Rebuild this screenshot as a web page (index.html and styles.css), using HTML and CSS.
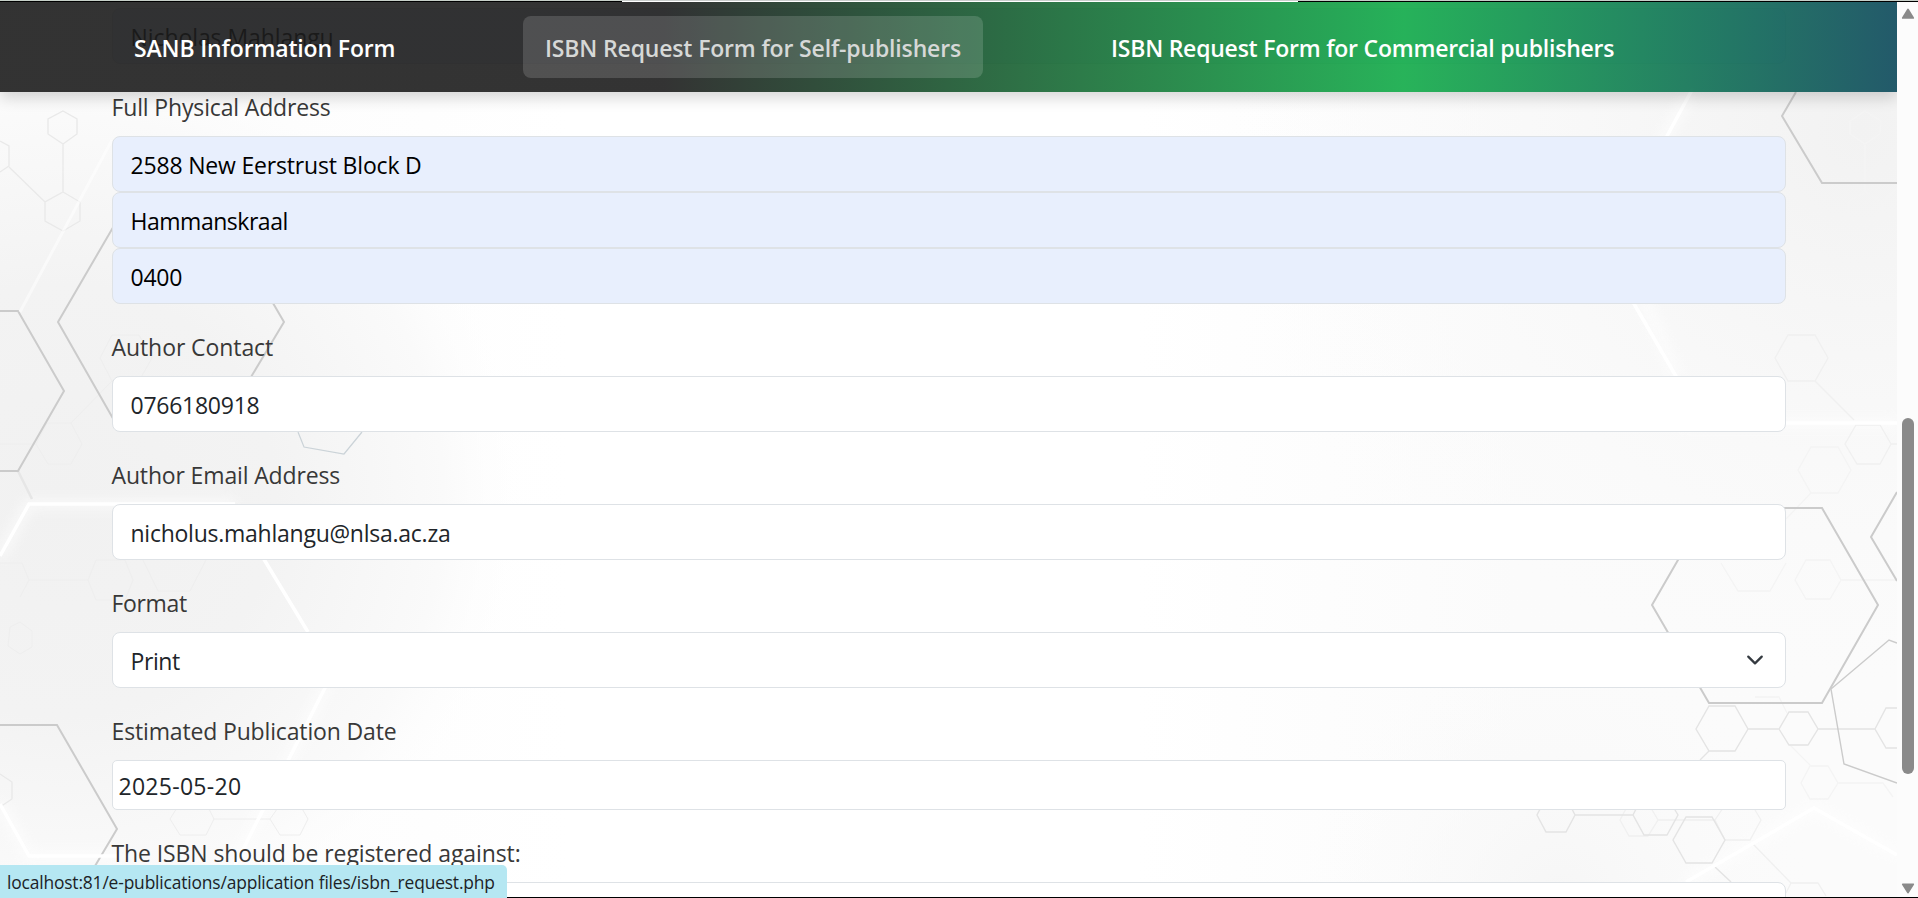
FILE: index.html
```html
<!DOCTYPE html>
<html lang="en">
<head>
<meta charset="utf-8">
<title>ISBN Request Form</title>
<link rel="stylesheet" href="styles.css">
</head>
<body>
<div class="top-edge"><span class="top-edge-light"></span></div>
<div class="window">
  <div class="page">
    <svg class="backdrop" viewBox="0 0 1897 898" aria-hidden="true">
      <defs>
        <radialGradient id="shadeLeft" gradientUnits="userSpaceOnUse" cx="60" cy="500" r="480">
          <stop offset="0" stop-color="#f1f1f1"/><stop offset=".45" stop-color="#f3f3f3"/><stop offset=".8" stop-color="#fafafa"/><stop offset="1" stop-color="#fff" stop-opacity="0"/>
        </radialGradient>
        <radialGradient id="shadeRight" gradientUnits="userSpaceOnUse" cx="1860" cy="130" r="640">
          <stop offset="0" stop-color="#f2f2f2"/><stop offset=".35" stop-color="#f7f7f7"/><stop offset="1" stop-color="#fcfcfc" stop-opacity="0"/>
        </radialGradient>
        <linearGradient id="base" x1="0" x2="1" y1="0" y2="0">
          <stop offset="0" stop-color="#fbfbfb"/><stop offset=".15" stop-color="#fdfdfd"/><stop offset=".3" stop-color="#fff"/><stop offset=".6" stop-color="#fff"/><stop offset=".8" stop-color="#fbfbfb"/><stop offset="1" stop-color="#fbfbfb"/>
        </linearGradient>
        <radialGradient id="shadeBottom" gradientUnits="userSpaceOnUse" cx="1560" cy="898" r="260">
          <stop offset="0" stop-color="#f6f6f6"/><stop offset="1" stop-color="#fbfbfb" stop-opacity="0"/>
        </radialGradient>
        <filter id="glow" x="-20%" y="-20%" width="140%" height="140%"><feGaussianBlur stdDeviation="6"/></filter>
      </defs>
      <rect width="1897" height="898" fill="url(#base)"/>
      <rect width="620" height="898" fill="url(#shadeLeft)"/>
      <rect x="1200" width="697" height="898" fill="url(#shadeRight)"/>
      <rect x="1200" y="600" width="697" height="298" fill="url(#shadeBottom)"/>
      <g class="halo" filter="url(#glow)">
        <path d="M0 556 29 504H235M0 804l29 52h90M328 682l-93 183"/>
        <path d="M1693 88l-80 140 64 148M1677 423h220M1686 882l128-74 83 47"/>
      </g>
      <g class="trace faint">
        <path d="M112 335h27l13 23-13 23h-27l-12-23zM112 381l-41 42M47 423h24l11 21-11 20H48l-12-20zM0 444h36"/>
        <path d="M0 563h22l7 17-9 17M29 580h59M96 560h29l8 20-8 20H96l-8-20zM143 560l15 31h32l16-31"/>
        <path d="M170 819l10-16h26l8 16-8 16h-26zM213 819h57M270 819l10-14h20l8 14-8 16h-20z"/>
        <path d="M10 627l10-5 12 9v16l-12 7-12-8z"/>
      </g>
      <g class="trace fainter">
        <path d="M1865 111l16 10-1 13-15 10-15-10v-13zM1865 144v48M1865 192l17 10v19l-17 10-17-10v-19zM1882 202l15-14"/>
        <path d="M1811 447h27l13 23-13 23h-27l-13-23zM1811 493l-25 26M1721 563l17 28h32l16-28M1806 560h24l11 20-11 19h-24l-11-19zM1841 580h56"/>
        <path d="M1755 697h24l8 16M1790 745l20 20M1810 766h18l10 17-10 16h-18l-9-16zM1838 783h45l10 14"/>
      </g>
      <g class="trace pale-left">
        <path d="M63 111l14 8v15l-14 10-15-10v-15zM63 144v48M63 192l17 10v19l-17 10-18-10v-19zM45 202 9 167M0 141l9 5v20l-9 6M0 774l12 8v17l-12 8"/>
      </g>
      <g class="trace pale">
        <path d="M1788 335h27l13 23-13 23h-27l-13-23zM1815 381l39 39M1856 425h24l11 19-11 20h-23l-12-20zM1891 444h6"/>
        <path d="M1620 820l9-17h19l10 17-10 16h-19zM1658 820h57M1725 805l-10 15 10 20h25l11-20-9-15M1752 843l39 40h27l8 13M1791 883l-5 10"/>
      </g>
      <g class="trace soft">
        <path d="M1709 706h26l13 23-13 22h-26l-13-22zM1709 751l-9 9M1748 729h31l10-17h19l10 17-10 16h-19l-10-16M1818 729h57M1897 708h-11l-11 21 11 19h11"/>
        <path d="M1542 805l-5 10 9 17h20l9-17-5-10M1575 815h58l11 20h23l11-20-6-10M1638 805l-5 10M1686 817h26l13 23-13 23h-26l-13-23zM1715 867l16 15"/>
      </g>
      <path class="trace cool" d="M298 432l6 15 40 7 18-22"/>
      <path class="trace stub" d="M18 471l14 28"/>
      <g class="trace strong">
        <path d="M58 322l57-98h112l57 98-60 100H115zM0 311h18l46 80-46 80H0M0 725h57l60 104-22 37"/>
        <path d="M1796 92l-14 24 40 67h75M1708 508h114l56 97-56 98h-113l-57-98zM1897 492l-26 45 26 44"/>
        <path class="thin" d="M1897 643l-8-3-58 49 13 75 53 19"/>
      </g>
      <g class="beam">
        <path d="M0 556 29 504H235M0 804l29 52h90M262 556l46 76M328 682l-93 183"/>
        <path class="dim" d="M112 140L20 312"/>
        <path d="M1693 88l-40 74M1633 302l44 76M1777 423h120M1686 882l128-74 83 47"/>
      </g>
    </svg>

    <nav class="navbar">
      <a class="nav-item fit-sanb">SANB Information Form</a>
      <a class="nav-item active fit-self">ISBN Request Form for Self-publishers</a>
      <a class="nav-item fit-comm">ISBN Request Form for Commercial publishers</a>
    </nav>

    <form class="form">
      <div class="group">
        <div class="control filled"><span class="fit-name">Nicholas Mahlangu</span></div>
      </div>
      <div class="group">
        <label class="label"><span class="fit-phys">Full Physical Address</span></label>
        <div class="control filled"><span class="fit-street">2588 New Eerstrust Block D</span></div>
        <div class="control filled"><span class="fit-town">Hammanskraal</span></div>
        <div class="control filled"><span class="num">0400</span></div>
      </div>
      <div class="group">
        <label class="label"><span class="fit-contact">Author Contact</span></label>
        <div class="control"><span class="num">0766180918</span></div>
      </div>
      <div class="group">
        <label class="label"><span class="fit-email">Author Email Address</span></label>
        <div class="control"><span class="fit-mail">nicholus.mahlangu@nlsa.ac.za</span></div>
      </div>
      <div class="group">
        <label class="label"><span class="fit-format">Format</span></label>
        <div class="control select"><span class="fit-print">Print</span>
          <svg class="chevron" viewBox="0 0 16 16"><path d="m2 5 6 6 6-6"/></svg>
        </div>
      </div>
      <div class="group">
        <label class="label"><span class="fit-est">Estimated Publication Date</span></label>
        <div class="control date"><span class="fit-date">2025-05-20</span></div>
      </div>
      <div class="group">
        <label class="label"><span class="fit-reg">The ISBN should be registered against:</span></label>
        <div class="control"></div>
      </div>
    </form>
  </div>
  <div class="scrollbar">
    <svg class="arrow" viewBox="0 0 14 12"><path d="M7 2 12.2 10.4H1.8z"/></svg>
    <div class="thumb"></div>
    <svg class="arrow" viewBox="0 0 14 12"><path d="M7 10 12.2 1.8H1.8z"/></svg>
  </div>
</div>
<div class="bottom-edge"></div>
<div class="status">localhost:81/e-publications/application files/isbn_request.php</div>
</body>
</html>
```
FILE: styles.css
```css
* { box-sizing: border-box; }
body {
  margin: 0;
  height: 898px;
  overflow: hidden;
  display: flex;
  flex-direction: column;
  font-family: "Open Sans", "Noto Sans", sans-serif;
  font-size: 23px;
  color: #212529;
  background: #fcfcfc;
}
.top-edge {
  height: 2px;
  flex: none;
  background: linear-gradient(#c6cfc8 50%, #000 50%);
}
.top-edge-light {
  display: block;
  width: 676px;
  height: 2px;
  margin-left: 622px;
  background: linear-gradient(#c9cdcb 50%, #fff 50%);
}
.window {
  flex: 1;
  min-height: 0;
  display: grid;
  grid-template-columns: 1fr 21px;
}
.page {
  position: relative;
  overflow: hidden;
}
.backdrop {
  position: absolute;
  left: 0;
  top: -2px;
  width: 1897px;
  height: 898px;
}
.trace { fill: none; stroke-width: 1.3; }
.faint { stroke: #eeeeee; stroke-width: 1; }
.fainter { stroke: #f4f4f4; }
.pale-left { stroke: #e9e9e9; }
.pale { stroke: #f0f0f0; }
.soft { stroke: #e4e4e4; stroke-width: 1.4; }
.cool { stroke: #cbd3d8; stroke-width: 1.2; }
.stub { stroke: #e6e6e6; stroke-width: 2.5; }
.strong { stroke: #cbcbcb; stroke-width: 2; }
.thin { stroke-width: 1.4; }
.beam { fill: none; stroke: #fff; stroke-width: 3.5; }
.dim { opacity: .5; stroke-width: 3; }
.halo { fill: none; stroke: #fff; stroke-width: 10; opacity: .6; }

.navbar {
  position: absolute;
  z-index: 2;
  left: 0;
  top: 0;
  width: 100%;
  height: 90px;
  padding: 14px 112px;
  display: flex;
  align-items: flex-start;
  gap: 106px;
  background: linear-gradient(90deg, rgba(29,29,29,.9) 35%, rgba(17,171,72,.9) 74%, rgba(12,73,91,.9) 100%);
  box-shadow: 0 6px 14px rgba(0,0,0,.16);
}
.nav-item {
  height: 62px;
  line-height: 64px;
  padding-left: 22px;
  border-radius: 8px;
  color: #fff;
  font-weight: 600;
  white-space: nowrap;
}
.nav-item.active {
  background: rgba(255,255,255,.15);
  color: #d6d8d7;
}
.fit-sanb { width: 305px; letter-spacing: -.15px; }
.fit-self { width: 460px; letter-spacing: -.16px; }
.fit-comm { width: 547px; letter-spacing: -.23px; }

.form {
  position: relative;
  padding: 6px 111px 0 112px;
  display: flex;
  flex-direction: column;
  gap: 24px;
}
.label {
  display: block;
  height: 36px;
  margin-bottom: 12px;
  line-height: 38px;
  text-indent: -.5px;
  color: #383838;
  white-space: nowrap;
}
.control {
  height: 56px;
  padding: 2px 17.5px 0;
  display: flex;
  align-items: center;
  border: 1px solid #dee2e6;
  border-radius: 8px;
  background: #fff;
  white-space: nowrap;
}
.filled { background: #e8effd; color: #000; }
.select { justify-content: space-between; padding-right: 21px; }
.date { height: 50px; padding: 2px 5.5px 0; border-radius: 5px; }
.chevron {
  width: 18px;
  height: 18px;
  margin-top: -2px;
  fill: none;
  stroke: #343a40;
  stroke-width: 2;
  stroke-linecap: round;
  stroke-linejoin: round;
}
.num { letter-spacing: -.26px; }
.fit-name { letter-spacing: -.08px; }
.fit-phys { letter-spacing: -.15px; }
.fit-street { letter-spacing: -.18px; }
.fit-town { letter-spacing: -.48px; }
.fit-contact { letter-spacing: -.08px; }
.fit-email { letter-spacing: -.15px; }
.fit-mail { letter-spacing: -.25px; }
.fit-format { letter-spacing: -.35px; }
.fit-print { letter-spacing: -.4px; }
.fit-est { letter-spacing: -.15px; }
.fit-date { letter-spacing: .28px; }
.fit-reg { letter-spacing: -.1px; }

.scrollbar {
  display: flex;
  flex-direction: column;
  align-items: center;
  padding: 5px 0 2px 1px;
  background: #fcfcfc;
}
.arrow { width: 14px; height: 13px; fill: #8a8a8a; stroke: #8a8a8a; stroke-width: 1.8; stroke-linejoin: round; }
.thumb {
  width: 12px;
  height: 356px;
  margin: 398px 0 auto;
  border-radius: 6px;
  background: #8a8a8a;
}
.bottom-edge { height: 1px; flex: none; background: #000; }
.status {
  position: absolute;
  z-index: 3;
  left: 0;
  bottom: 0;
  width: 507px;
  height: 33px;
  padding-left: 7px;
  line-height: 35px;
  font-size: 17.4px;
  letter-spacing: -.16px;
  color: #1c2226;
  white-space: nowrap;
  background: #b5e7f2;
  border-top-right-radius: 5px;
}
```
